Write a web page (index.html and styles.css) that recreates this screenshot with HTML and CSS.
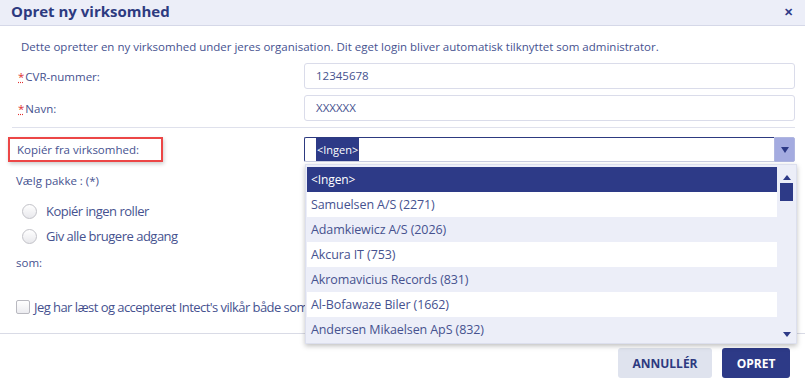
FILE: index.html
```html
<!DOCTYPE HTML>
<html lang="da">
  <head>
    <title>Opret ny virksomhed</title>
    <meta charset="utf-8">
    <link rel="stylesheet" href="styles.css">
  </head>
  <body>

  <div class="dialog">
    <div class="dialog-head">
      <span class="dialog-title">Opret ny virksomhed</span>
      <span class="close">&#x2715;</span>
    </div>

    <div class="dialog-body">
      <p class="intro">Dette opretter en ny virksomhed under jeres organisation. Dit eget login bliver automatisk tilknyttet som administrator.</p>

      <div class="row">
        <label class="lbl"><abbr class="req" title="påkrævet">*</abbr>CVR-nummer:</label>
        <div class="field">12345678</div>
      </div>
      <div class="row">
        <label class="lbl"><abbr class="req" title="påkrævet">*</abbr>Navn:</label>
        <div class="field">XXXXXX</div>
      </div>

      <div class="sep"></div>

      <div class="row row-copy">
        <label class="lbl"><span class="marked">Kopiér fra virksomhed:</span></label>
        <div class="combo">
          <div class="combo-input"><span class="combo-value">&lt;Ingen&gt;</span></div>
          <div class="combo-btn"><span class="tri-down"></span></div>

          <div class="popup">
            <ul class="items">
              <li class="item selected">&lt;Ingen&gt;</li>
              <li class="item">Samuelsen A/S (2271)</li>
              <li class="item alt">Adamkiewicz A/S (2026)</li>
              <li class="item">Akcura IT (753)</li>
              <li class="item alt">Akromavicius Records (831)</li>
              <li class="item">Al-Bofawaze Biler (1662)</li>
              <li class="item alt">Andersen Mikaelsen ApS (832)</li>
            </ul>
            <div class="scroll">
              <span class="tri-up"></span>
              <span class="thumb"></span>
              <span class="tri-down small"></span>
            </div>
          </div>
        </div>
      </div>

      <div class="pkg">Vælg pakke : (*)</div>
      <div class="radio-row first"><span class="radio"></span>Kopiér ingen roller</div>
      <div class="radio-row"><span class="radio"></span>Giv alle brugere adgang</div>
      <div class="som">som:</div>

      <div class="terms"><span class="check"></span>Jeg har læst og accepteret Intect's vilkår både som bruger og som administrator.</div>
    </div>

    <div class="dialog-foot">
      <button class="btn btn-cancel">Annullér</button>
      <button class="btn btn-ok">Opret</button>
    </div>
  </div>

  </body>
</html>
```
FILE: styles.css
```css
html, body {
  margin: 0;
  padding: 0;
  background: #ffffff;
}
body {
  font-family: "Open Sans", "Noto Sans", sans-serif;
  color: #46528f;
  font-size: 11.5px;
  width: 805px;
  height: 383px;
  overflow: hidden;
}

.dialog-head {
  height: 25px;
  background: #eceef8;
  border-bottom: 1px solid #d5d8e8;
  display: flex;
  align-items: center;
  justify-content: space-between;
  padding: 0 12px 0 11px;
}
.dialog-title {
  font-size: 15px;
  font-weight: bold;
  color: #2d3a80;
  line-height: 20px;
  margin-top: -4px;
}
.close {
  font-size: 11px;
  font-weight: bold;
  color: #2d3a87;
  margin-top: -3px;
}

.dialog-body {
  padding: 0 10px 0 16px;
  height: 307px;
}
.intro {
  margin: 0;
  padding: 13px 0 0 5px;
  line-height: 16px;
  height: 24px;
}

.row {
  display: flex;
  align-items: center;
  height: 26px;
  margin-bottom: 6px;
}
.lbl {
  width: 288px;
  display: flex;
  align-items: center;
}
.req {
  color: #e03030;
  text-decoration: underline dotted #e03030;
  margin: 0 1px 0 2px;
}
.field {
  flex: 1;
  height: 24px;
  border: 1px solid #dadcea;
  border-radius: 3px;
  line-height: 24px;
  padding-left: 11px;
}

.sep {
  height: 1px;
  background: #dfe1ec;
  margin: 0 0 9px -4px;
}

.row-copy {
  height: 25px;
  margin-bottom: 0;
}
.marked {
  display: inline-block;
  margin-left: -8px;
  padding: 0 7px 0 7px;
  width: 137px;
  height: 21px;
  line-height: 21px;
  border: 2px solid #ec4646;
  box-shadow: 1px 2px 4px rgba(0, 0, 0, 0.2);
}

.combo {
  flex: 1;
  position: relative;
  display: flex;
  height: 25px;
}
.combo-input {
  flex: 1;
  border: 1px solid #2d3a80;
  border-right: none;
  border-bottom-color: #c9cde0;
  border-radius: 2px 0 0 2px;
  padding-left: 11px;
  display: flex;
  align-items: stretch;
}
.combo-value {
  background: #2d3a87;
  color: #ffffff;
  font-size: 11px;
  line-height: 24px;
  padding: 0 1px;
}
.combo-btn {
  width: 19px;
  background: #a4abe0;
  border: 1px solid #b0b6e0;
  border-radius: 0 2px 2px 0;
  display: flex;
  align-items: center;
  justify-content: center;
}
.tri-down {
  width: 0;
  height: 0;
  border-left: 4px solid transparent;
  border-right: 4px solid transparent;
  border-top: 6px solid #2d3a87;
}
.tri-down.small {
  border-top-width: 5px;
}
.tri-up {
  width: 0;
  height: 0;
  border-left: 4px solid transparent;
  border-right: 4px solid transparent;
  border-bottom: 5px solid #2d3a87;
}

.popup {
  position: absolute;
  top: 27px;
  left: 1px;
  right: -2px;
  height: 180px;
  background: #eceef8;
  border: 1px solid #dcdfee;
  box-shadow: 0 2px 5px rgba(0, 0, 0, 0.25);
  display: flex;
  padding: 2px 0 0 1px;
  box-sizing: border-box;
  z-index: 2;
}
.items {
  list-style: none;
  margin: 0;
  padding: 0;
  flex: 1;
}
.item {
  height: 25px;
  line-height: 25px;
  padding-left: 4px;
  background: #ffffff;
  font-size: 12.5px;
  letter-spacing: -0.1px;
  white-space: nowrap;
}
.item.alt {
  background: #eceef8;
}
.item.selected {
  background: #2d3a87;
  color: #ffffff;
  font-size: 12px;
}
.scroll {
  width: 19px;
  display: flex;
  flex-direction: column;
  align-items: center;
  padding-top: 8px;
}
.thumb {
  width: 13px;
  height: 18px;
  background: #2d3a87;
  margin-top: 3px;
}
.scroll .tri-down {
  margin-top: auto;
  margin-bottom: 6px;
}

.pkg {
  margin-top: 11px;
  height: 16px;
  line-height: 16px;
}
.radio-row {
  display: flex;
  align-items: center;
  font-size: 13px;
  letter-spacing: -0.5px;
  height: 18px;
  margin-top: 7px;
  padding-left: 6px;
}
.radio-row.first {
  margin-top: 13px;
}
.radio {
  width: 13px;
  height: 13px;
  border-radius: 50%;
  border: 1px solid #c2c2c8;
  background: linear-gradient(#ffffff, #e8e8ec);
  margin-right: 9px;
  flex: none;
}
.som {
  margin-top: 10px;
  height: 16px;
  line-height: 16px;
}
.terms {
  margin-top: 28px;
  display: flex;
  align-items: center;
  font-size: 13px;
  letter-spacing: -0.55px;
  white-space: nowrap;
  height: 16px;
}
.check {
  width: 12px;
  height: 12px;
  border: 1px solid #b9b9c0;
  border-radius: 2px;
  background: linear-gradient(#ffffff, #ececf0);
  margin-right: 4px;
  flex: none;
}

.dialog-foot {
  border-top: 1px solid #d9dbe6;
  display: flex;
  justify-content: flex-end;
  gap: 10px;
  padding: 14px 15px 0 0;
}
.btn {
  height: 30px;
  border: none;
  border-radius: 3px;
  font-family: "Open Sans", "Noto Sans", sans-serif;
  font-size: 12px;
  font-weight: bold;
  text-transform: uppercase;
  padding: 0 14px;
}
.btn-cancel {
  background: #dfe3ee;
  color: #2d3a80;
  width: 94px;
}
.btn-ok {
  background: #2d3a87;
  color: #ffffff;
  width: 68px;
}
```
